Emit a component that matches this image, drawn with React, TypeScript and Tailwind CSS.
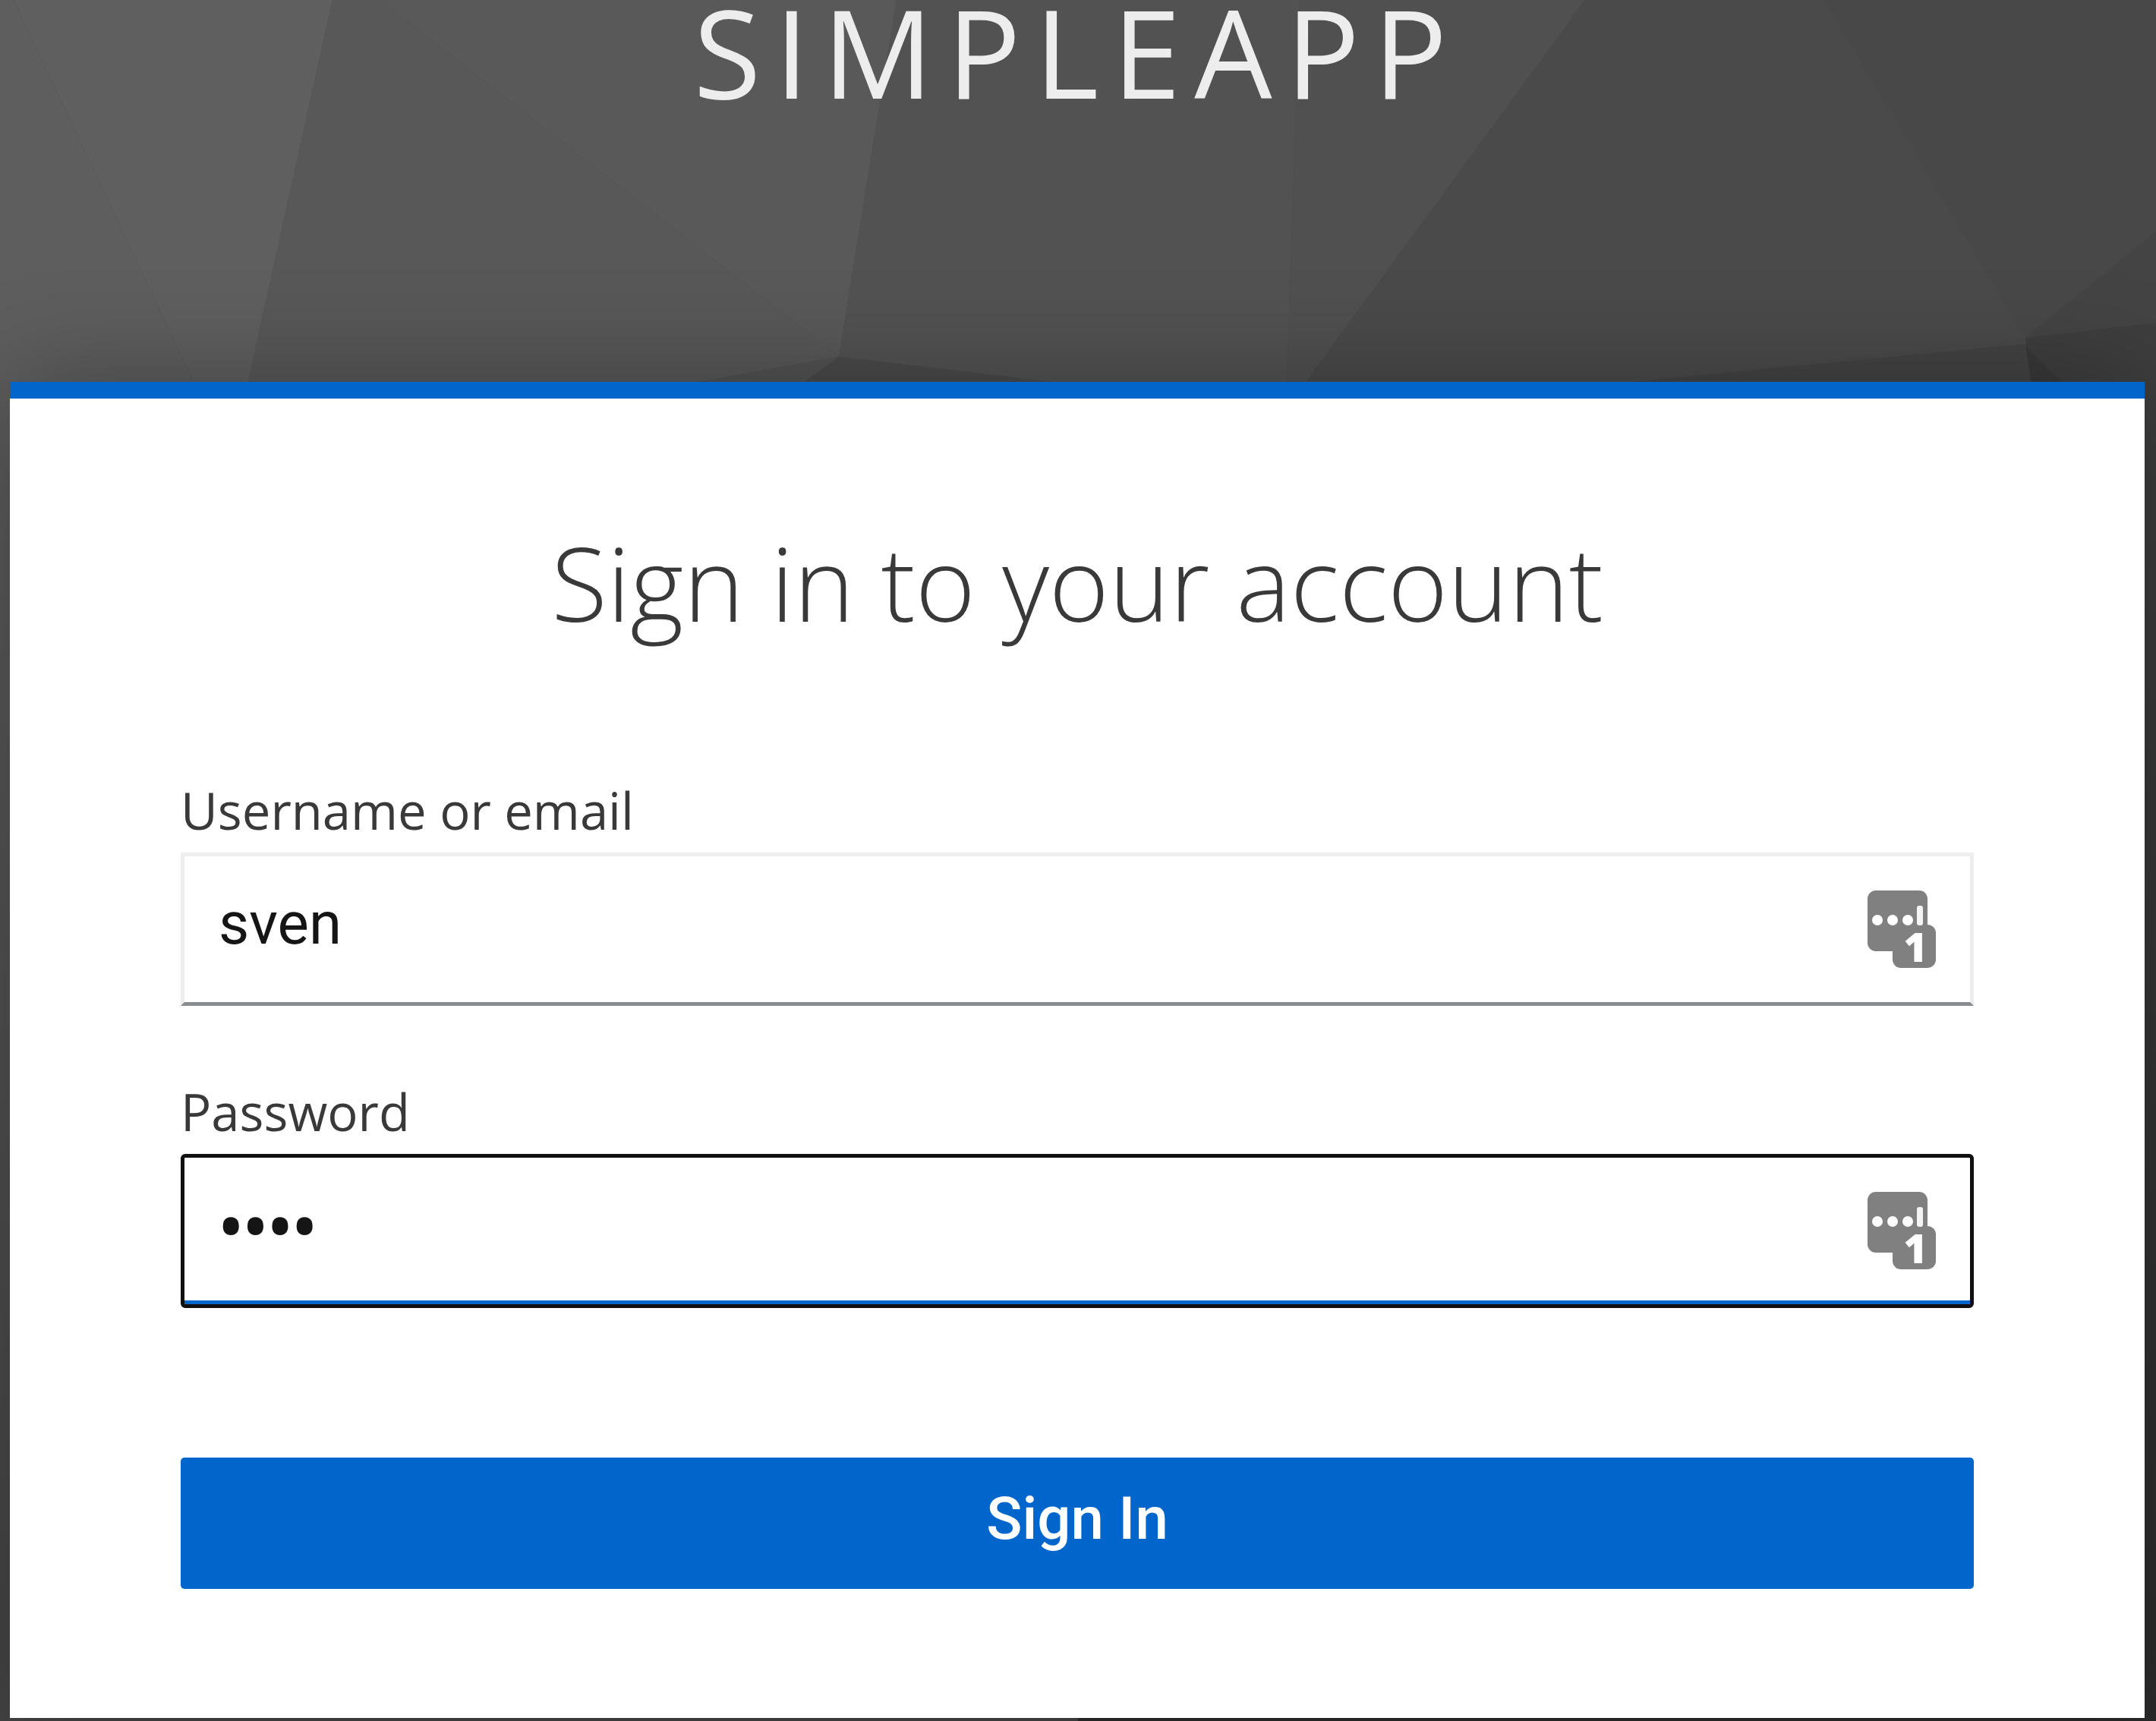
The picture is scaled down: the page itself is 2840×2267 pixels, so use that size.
import React from "react";

function Backdrop() {
  return (
    <svg
      aria-hidden="true"
      className="absolute inset-0 -z-10 h-full w-full"
      viewBox="0 0 2840 2267"
      preserveAspectRatio="none"
    >
      <defs>
        <linearGradient id="left-edge" x1="0" y1="0" x2="0" y2="1">
          <stop offset="0" stopColor="#5d5d5d" />
          <stop offset="1" stopColor="#444444" />
        </linearGradient>
        <linearGradient id="right-edge" x1="0" y1="0" x2="0" y2="1">
          <stop offset="0" stopColor="#3e3e3e" />
          <stop offset="1" stopColor="#2b2b2b" />
        </linearGradient>
      </defs>
      <rect width="2840" height="2267" fill="#494949" />
      <polygon points="0,0 18,0 255,503 0,503" fill="#5e5e5e" />
      <polygon points="18,0 438,0 327,503 255,503" fill="#5f5f5f" />
      <polygon points="438,0 500,0 1105,470 920,503 327,503" fill="#585858" />
      <polygon points="500,0 1181,0 1105,470" fill="#595959" />
      <polygon points="1181,0 1712,0 1695,503 1385,503 1105,470" fill="#525252" />
      <polygon points="1712,0 2088,0 1720,503 1695,503" fill="#505050" />
      <polygon points="2088,0 2403,0 2668,445 2150,503 1720,503" fill="#4a4a4a" />
      <polygon points="2403,0 2840,0 2840,305 2668,445" fill="#484848" />
      <polygon points="2840,305 2668,445 2840,425" fill="#444444" />
      <polygon points="2840,425 2668,445 2675,503 2840,503" fill="#3e3e3e" />
      <polygon points="2668,455 2675,503 2715,503" fill="#393939" />
      <polygon points="2668,453 2675,503 2150,503" fill="#434343" />
      <polygon points="920,503 1105,470 1060,503" fill="#525252" />
      <polygon points="1060,503 1105,470 1385,503" fill="#4a4a4a" />
      <rect y="503" width="1420" height="1764" fill="url(#left-edge)" />
      <rect x="1420" y="503" width="1420" height="1764" fill="url(#right-edge)" />
    </svg>
  );
}

function KeyIcon() {
  return (
    <svg
      viewBox="0 0 90 102"
      className="h-[102px] w-[90px] overflow-visible"
      aria-hidden="true"
    >
      <rect width="79" height="80" rx="11" fill="#808080" />
      <rect x="33" y="45" width="57" height="57" rx="11" fill="#808080" />
      <circle cx="13" cy="39" r="7" fill="#fff" />
      <circle cx="33" cy="39" r="7" fill="#fff" />
      <circle cx="53" cy="39" r="7" fill="#fff" />
      <rect x="65" y="20" width="8" height="26" rx="3" fill="#f4f4f4" />
      <text
        x="63"
        y="94"
        textAnchor="middle"
        fontSize="53"
        fontWeight="800"
        fontFamily="Open Sans, sans-serif"
        fill="#fff"
      >
        1
      </text>
    </svg>
  );
}

function ManagerButton({ label }: { label: string }) {
  return (
    <button
      type="button"
      aria-label={label}
      className="absolute top-[50px] right-[50px]"
    >
      <KeyIcon />
    </button>
  );
}

export default function App() {
  return (
    <div className="relative isolate flex min-h-screen flex-col font-['Open_Sans',sans-serif]">
      <Backdrop />
      <header className="pr-[15px] pb-[368px] pl-[13px] text-center text-[162px] leading-[135px] tracking-[18px] text-[#ededed] uppercase">
        SimpleApp
      </header>
      <main className="mr-[15px] mb-1 ml-[13px] border-t-[22px] border-[#0066cc] bg-white px-[225px] pt-[152px] pb-[170px] shadow-[0_0_130px_rgba(0,0,0,0.3)]">
        <h1 className="mb-[160px] text-center text-[135px] leading-[180px] font-light text-[#393939]">
          Sign in to your account
        </h1>
        <form className="flex flex-col" onSubmit={(e) => e.preventDefault()}>
          <label
            htmlFor="username"
            className="mb-1.5 text-[67px] leading-[100px] text-[#393939]"
          >
            Username or email
          </label>
          <div className="relative mb-[89px]">
            <input
              id="username"
              type="text"
              defaultValue="sven"
              className="block h-[202px] w-full border-[5px] border-[#ededed] border-b-[#8a8d90] bg-white pr-[160px] pb-4 pl-[45px] font-[Roboto,sans-serif] text-[78px] text-[#151515] outline-none"
            />
            <ManagerButton label="Fill in the username" />
          </div>
          <label
            htmlFor="password"
            className="mb-1.5 text-[67px] leading-[100px] text-[#393939]"
          >
            Password
          </label>
          <div className="relative mb-[197px]">
            <input
              id="password"
              type="password"
              defaultValue="sven"
              className="block h-[203px] w-full rounded-[6px] border-[5px] border-[#101010] bg-white pr-[160px] pb-4 pl-[45px] font-['Open_Sans',sans-serif] text-[86px] font-semibold text-[#151515] shadow-[inset_0_-5px_0_#0066cc] outline-none"
            />
            <ManagerButton label="Fill in the password" />
          </div>
          <button
            type="submit"
            className="h-[173px] rounded-[5px] bg-[#0066cc] pb-3 font-[Roboto,sans-serif] text-[78px] font-medium text-white"
          >
            Sign In
          </button>
        </form>
      </main>
    </div>
  );
}
